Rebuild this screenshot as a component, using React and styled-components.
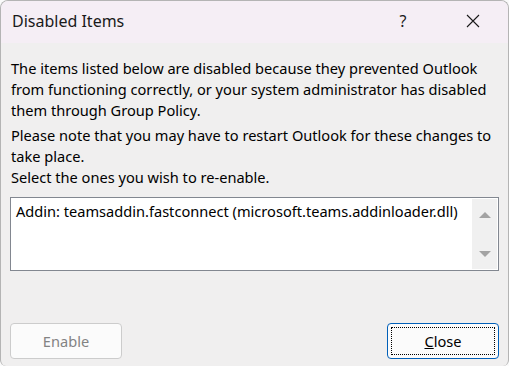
import styled, { createGlobalStyle } from 'styled-components';

const GlobalStyle = createGlobalStyle`
  html, body {
    margin: 0;
    padding: 0;
    background: #fafafa;
  }
  * {
    box-sizing: border-box;
  }
`;

const App = () => {
  return (
    <>
      <GlobalStyle />
      <Window>
        <TitleBar>
          <Title>Disabled Items</Title>
          <CaptionButton aria-label='Help'>?</CaptionButton>
          <CaptionButton aria-label='Close'>
            <svg width='14' height='14' viewBox='0 0 14 14'>
              <path d='M1 1 L13 13 M13 1 L1 13' stroke='#1a1a1a' strokeWidth='1.1' fill='none' />
            </svg>
          </CaptionButton>
        </TitleBar>
        <Body>
          <Text>
            The items listed below are disabled because they prevented Outlook
            from functioning correctly, or your system administrator has disabled
            them through Group Policy.
          </Text>
          <Text gap={4}>
            Please note that you may have to restart Outlook for these changes to
            take place.
          </Text>
          <Text>Select the ones you wish to re-enable.</Text>
          <ListBox>
            <Items>
              <Item>Addin: teamsaddin.fastconnect (microsoft.teams.addinloader.dll)</Item>
            </Items>
            <ScrollBar>
              <Arrow up />
              <Arrow />
            </ScrollBar>
          </ListBox>
          <Footer>
            <Button disabled>Enable</Button>
            <Button isDefault>
              <FocusRing>
                <u>C</u>lose
              </FocusRing>
            </Button>
          </Footer>
        </Body>
      </Window>
    </>
  );
};

const Window = styled.div`
  width: 509px;
  height: 366px;
  background: #f0efef;
  border: 1px solid #b4b4b4;
  border-bottom: none;
  border-radius: 8px 8px 6px 6px;
  overflow: hidden;
  display: flex;
  flex-direction: column;
  font-family: 'Segoe UI', 'Noto Sans', sans-serif;
  color: #000;
`;

const TitleBar = styled.div`
  height: 42px;
  flex: none;
  display: flex;
  align-items: center;
  background: #f5eef5;
  padding-left: 11px;
`;

const Title = styled.div`
  flex: 1;
  font-size: 16px;
  color: #1a1a1a;
  padding-bottom: 2px;
`;

const CaptionButton = styled.div`
  width: 70px;
  height: 42px;
  display: flex;
  align-items: center;
  justify-content: center;
  font-size: 16px;
  color: #1a1a1a;
  padding-bottom: 2px;
`;

const Body = styled.div`
  flex: 1;
  display: flex;
  flex-direction: column;
  padding: 15px 9px 7px 9px;
`;

const Text = styled.p`
  margin: ${({ gap }) => gap || 0}px -8px 0 1px;
  font-size: 14.6px;
  line-height: 21px;
`;

const ListBox = styled.div`
  margin-top: 9px;
  height: 74px;
  display: flex;
  background: #fff;
  border: 1px solid #828790;
`;

const Items = styled.div`
  flex: 1;
  padding: 3px 5px;
`;

const Item = styled.div`
  font-size: 14.6px;
  line-height: 21px;
`;

const ScrollBar = styled.div`
  width: 25px;
  margin: 1px 1px 1px 0;
  background: #f0f0f0;
  display: flex;
  flex-direction: column;
  align-items: center;
  justify-content: space-between;
  padding: 13px 0 12px;
`;

const Arrow = styled.div`
  width: 0;
  height: 0;
  border-left: 6px solid transparent;
  border-right: 6px solid transparent;
  ${({ up }) =>
    up ? 'border-bottom: 6px solid #a3a3a3;' : 'border-top: 6px solid #a3a3a3;'}
`;

const Footer = styled.div`
  margin-top: auto;
  display: flex;
  justify-content: space-between;
`;

const Button = styled.button`
  width: 112px;
  height: 36px;
  padding: 3px;
  border-radius: 4px;
  background: #fbfbfb;
  font-family: 'Segoe UI', 'Noto Sans', sans-serif;
  font-size: 14.6px;
  display: flex;
  align-items: stretch;
  justify-content: stretch;
  border: 1px solid ${({ isDefault }) => (isDefault ? '#005fb8' : '#cccccc')};
  color: ${({ disabled }) => (disabled ? '#838383' : '#000')};

  &:disabled {
    justify-content: center;
    align-items: center;
  }
`;

const FocusRing = styled.span`
  flex: 1;
  display: flex;
  align-items: center;
  justify-content: center;
  border: 1px dotted #000;
`;

export default App;
